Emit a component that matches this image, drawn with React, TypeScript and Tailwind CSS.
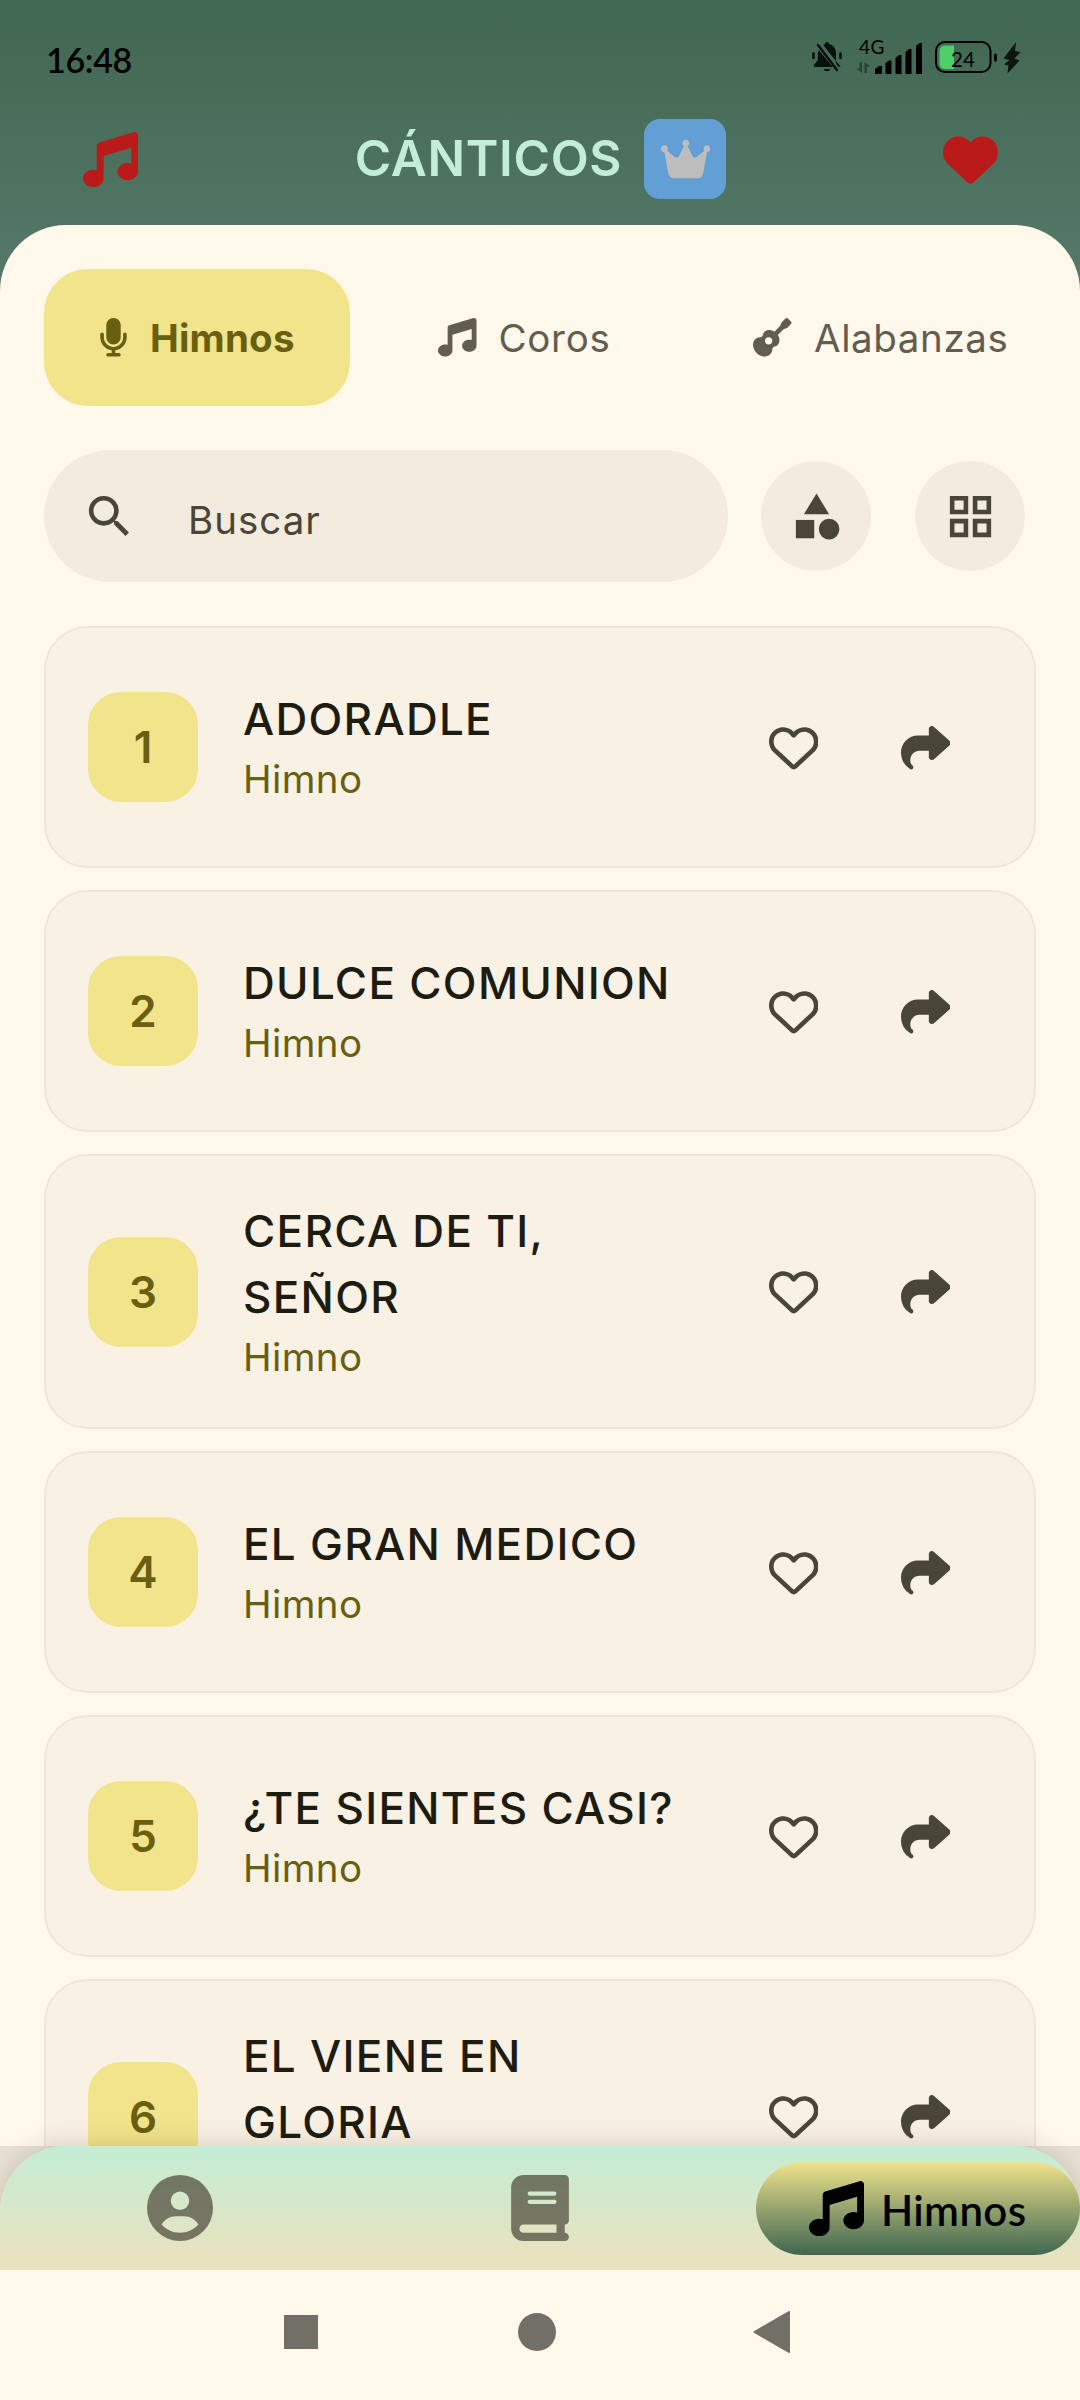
import React from "react";
import {
  FaBook,
  FaCircleUser,
  FaCrown,
  FaGuitar,
  FaHeart,
  FaMicrophone,
  FaMusic,
  FaRegHeart,
  FaShare,
} from "react-icons/fa6";
import { MdCategory, MdGridView, MdSearch } from "react-icons/md";

const songs = [
  { number: 1, title: "ADORADLE" },
  { number: 2, title: "DULCE COMUNION" },
  { number: 3, title: "CERCA DE TI, SEÑOR" },
  { number: 4, title: "EL GRAN MEDICO" },
  { number: 5, title: "¿TE SIENTES CASI?" },
  { number: 6, title: "EL VIENE EN GLORIA" },
];

function BellOffIcon() {
  return (
    <svg width="30" height="32" viewBox="0 0 30 32" fill="#08110c" className="mt-[1px]">
      <path d="M10.5 4.6C11.8 3.6 12.6 3.2 13 3a2 2 0 0 1 4 0c4.6 1.2 7 4.8 7 9.500v7.500z" />
      <path d="M7 9.200 20.800 26H3c-1.500 0-1.700-1.500-.8-2.400L5.800 19v-6.500c0-1.200.4-2.300 1.200-3.300z" />
      <path d="M12 28h6a3 2.200 0 0 1-6 0z" />
      <path d="M8 3.500 26.800 28.500" stroke="#456a56" strokeWidth="4.600" />
      <path d="M6 4 25 29" stroke="#08110c" strokeWidth="2.400" strokeLinecap="round" />
      <path d="M24 20.500 28 25.500 25.500 24.500z" stroke="#08110c" strokeWidth="1" />
      <path d="M1.500 12.500v4.500M28.500 12.500v4.500" stroke="#08110c" strokeWidth="2.600" strokeLinecap="round" />
    </svg>
  );
}

function SignalIcon() {
  return (
    <div className="relative ml-[13px] h-[34px] w-[68px]">
      <svg width="68" height="34" viewBox="0 0 68 34">
        <path d="M7 22v11l-6-4.500h3.500V22zM9.500 33V22l6 4.500H12V33z" fill="#2b4535" />
        <path
          d="M20 34v-5l4-3h3v8zM30.500 34V23l3.500-2.500h2.500V34zM40.500 34V18l3.500-3h2.500v19zM50.500 34V12l3.500-3h2.500v25zM61 34V6l3.500-3H67v31z"
          fill="#000"
        />
      </svg>
      <span className="absolute top-[-5px] left-[4px] font-[Lato] text-[19px] leading-[24px] tracking-[0.5px] text-black">
        4G
      </span>
    </div>
  );
}

function BatteryIcon() {
  return (
    <div className="relative ml-[12px] h-[34px] w-[64px]">
      <svg width="64" height="34" viewBox="0 0 64 34">
        <path d="M10 5.500h9v23.500h-9c-4 0-5.500-3-5.500-6V11.500c0-3 1.500-6 5.500-6z" fill="#4cd06a" />
        <rect x="1" y="2" width="54.500" height="30" rx="9" fill="none" stroke="#000" strokeWidth="2" />
        <path d="M60.500 15v5" stroke="#000" strokeWidth="3" strokeLinecap="round" />
      </svg>
      <span className="absolute top-[6px] left-[16px] font-[Lato] text-[20.500px] leading-[26px] text-black">24</span>
    </div>
  );
}

function StatusBar() {
  return (
    <div className="flex h-[94px] items-start justify-between pr-[59px] pl-[46px]">
      <span className="mt-[38px] font-[Lato] text-[34px] leading-[44px] font-semibold tracking-[-0.3px] text-black">
        16:48
      </span>
      <div className="mt-[40px] flex items-start">
        <BellOffIcon />
        <SignalIcon />
        <BatteryIcon />
        <svg width="18" height="34" viewBox="0 0 18 34" className="ml-[4px]" fill="#0b1610">
          <path d="M13 2 0.500 18.500 6.500 20 1 24.500 5.500 25.500 4.500 33.500 16.500 20.500 11.500 18.500 17.500 12 12 11z" />
        </svg>
      </div>
    </div>
  );
}

function Header() {
  return (
    <div className="flex h-[131px] items-start justify-between pr-[82px] pl-[83px]">
      <FaMusic className="mt-[38px] size-[55px] text-[#bb1a1b]" />
      <div className="flex items-center gap-[22px] pt-[25px]">
        <h1 className="mt-[-2px] text-[49.5px] leading-[80px] font-semibold tracking-[0.7px] text-[#c2edd6]">
          CÁNTICOS
        </h1>
        <div className="flex h-[80px] w-[82px] items-center justify-center rounded-[16px] bg-[#619fd4]">
          <FaCrown className="h-[44px] w-[49.5px] text-[#bdbdbd]" />
        </div>
      </div>
      <FaHeart className="mt-[38px] size-[55px] text-[#bb1a1b]" />
    </div>
  );
}

function Tabs() {
  return (
    <div className="flex gap-[33px] text-[38.5px] leading-[55px] whitespace-nowrap text-[#615e51]">
      <div className="flex h-[137px] w-[306px] shrink-0 items-center gap-[22px] rounded-[44px] bg-[#f1e48b] pl-[55px] font-bold tracking-[0.2px] text-[#695f12]">
        <FaMicrophone className="h-[38.5px] w-[29px]" />
        <span className="mt-[2px]">Himnos</span>
      </div>
      <div className="flex h-[137px] shrink-0 items-center gap-[22px] px-[55px] tracking-[0.7px]">
        <FaMusic className="size-[38.5px]" />
        <span className="mt-[2px]">Coros</span>
      </div>
      <div className="flex h-[137px] shrink-0 items-center gap-[22px] pl-[55px] tracking-[0.6px]">
        <FaGuitar className="size-[38.5px]" />
        <span className="mt-[2px]">Alabanzas</span>
      </div>
    </div>
  );
}

function SearchRow() {
  return (
    <div className="mt-[44px] flex items-center text-[#4a4637]">
      <div className="flex h-[132px] w-[684px] items-center rounded-full bg-[#f3ebde] pl-[38px]">
        <MdSearch className="size-[55px]" />
        <span className="mt-[8px] ml-[51px] text-[38.5px] leading-[55px] tracking-[1px]">Buscar</span>
      </div>
      <div className="ml-[33px] flex size-[110px] items-center justify-center rounded-full bg-[#f3ebde]">
        <MdCategory className="size-[55px]" />
      </div>
      <div className="ml-[44px] flex size-[110px] items-center justify-center rounded-full bg-[#f3ebde]">
        <MdGridView className="size-[55px]" />
      </div>
    </div>
  );
}

function SongCard({ number, title }: { number: number; title: string }) {
  return (
    <div className="flex min-h-[242px] shrink-0 items-center rounded-[44px] border-[2.5px] border-[#eee6d8] bg-[#f9f1e4] py-[42.5px] pr-[84px] pl-[42px] text-[#4a4637]">
      <div className="flex size-[110px] shrink-0 items-center justify-center rounded-[33px] bg-[#f1e48b] text-[44px] leading-[66px] font-semibold text-[#695f12]">
        {number}
      </div>
      <div className="mt-[-1px] ml-[45px] w-[440px]">
        <div className="text-[44px] leading-[66px] font-medium tracking-[1.3px] text-[#1d1c11]">{title}</div>
        <div className="text-[38.5px] leading-[55px] tracking-[0.4px] text-[#695f12]">Himno</div>
      </div>
      <FaRegHeart className="ml-auto size-[49.5px]" />
      <FaShare className="ml-[82.5px] size-[49.5px]" />
    </div>
  );
}

function BottomBar() {
  return (
    <div className="relative h-[124px] shrink-0 bg-[#e8e2d4]">
      <div className="flex h-full items-center rounded-t-[66px] bg-linear-to-b from-[#c3edd5] to-[#ebe1bd] shadow-[0_-2px_26px_rgba(60,50,30,0.18)]">
        <FaCircleUser className="ml-[147px] size-[66px] text-[#4a4637]/70" />
        <FaBook className="ml-[298px] h-[66px] w-[58px] text-[#4a4637]/70" />
        <div className="ml-[187px] flex h-[93px] w-[324px] items-center rounded-full bg-linear-to-b from-[#f1e48b] to-[#406750] pl-[53px] text-black">
          <FaMusic className="size-[55px]" />
          <span className="ml-[17px] pt-[4px] font-[Lato] text-[42px] leading-[50px] font-semibold tracking-[0.4px]">
            Himnos
          </span>
        </div>
      </div>
    </div>
  );
}

function SystemNav() {
  return (
    <div className="relative z-10 flex h-[130px] shrink-0 items-center bg-[#fff8eb] pb-[6px] pl-[284px] text-[#726f67]">
      <div className="size-[34px] bg-[#726f67]" />
      <div className="ml-[200px] size-[38px] rounded-full bg-[#726f67]" />
      <svg width="38" height="42" viewBox="0 0 38 42" className="ml-[197px]" fill="currentColor">
        <path d="M36 1v40L1.500 21z" stroke="currentColor" strokeWidth="2" strokeLinejoin="round" />
      </svg>
    </div>
  );
}

export default function App() {
  return (
    <div className="flex h-[2400px] w-[1080px] flex-col overflow-hidden bg-linear-to-b from-[#406750] from-0% to-[#57796a] to-[292px] font-[Inter,sans-serif]">
      <StatusBar />
      <Header />
      <div className="flex min-h-0 flex-1 flex-col overflow-hidden rounded-t-[66px] bg-[#fff8eb] px-[44px] pt-[44px]">
        <Tabs />
        <SearchRow />
        <div className="mt-[44.4px] flex w-[992px] flex-col gap-[22px]">
          {songs.map((song) => (
            <SongCard key={song.number} number={song.number} title={song.title} />
          ))}
        </div>
      </div>
      <BottomBar />
      <SystemNav />
    </div>
  );
}
